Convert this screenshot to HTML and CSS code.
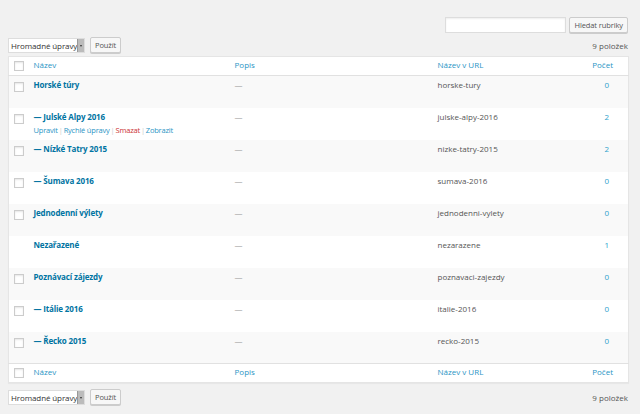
FILE: index.html
```html
<!DOCTYPE html>
<html lang="cs">
<head>
<meta charset="utf-8">
<link rel="stylesheet" href="styles.css">
</head>
<body>
<div class="page">
  <div class="search">
    <input class="search-input" type="text">
    <button class="btn">Hledat rubriky</button>
  </div>
  <div class="toolbar">
    <div class="actions">
      <div class="select"><span class="select-label">Hromadné úpravy</span><span class="select-arrow"></span></div>
      <button class="btn">Použít</button>
    </div>
    <span class="count-items">9 položek</span>
  </div>
  <table class="list">
    <colgroup><col class="c-cb"><col class="c-name"><col class="c-desc"><col class="c-slug"><col class="c-count"></colgroup>
    <thead>
      <tr><th class="cb"><span class="box"></span></th><th>Název</th><th>Popis</th><th>Název v URL</th><th class="num">Počet</th></tr>
    </thead>
    <tbody>
      <tr class="alt"><td class="cb"><span class="box"></span></td><td class="name">Horské túry</td><td class="desc">—</td><td class="slug">horske-tury</td><td class="num">0</td></tr>
      <tr><td class="cb"><span class="box"></span></td><td class="name">— Julské Alpy 2016<div class="row-actions"><span class="ra">Upravit</span><span class="sep">|</span><span class="ra">Rychlé úpravy</span><span class="sep">|</span><span class="ra del">Smazat</span><span class="sep">|</span><span class="ra">Zobrazit</span></div></td><td class="desc">—</td><td class="slug">julske-alpy-2016</td><td class="num">2</td></tr>
      <tr class="alt"><td class="cb"><span class="box"></span></td><td class="name">— Nízké Tatry 2015</td><td class="desc">—</td><td class="slug">nizke-tatry-2015</td><td class="num">2</td></tr>
      <tr><td class="cb"><span class="box"></span></td><td class="name">— Šumava 2016</td><td class="desc">—</td><td class="slug">sumava-2016</td><td class="num">0</td></tr>
      <tr class="alt"><td class="cb"><span class="box"></span></td><td class="name">Jednodenní výlety</td><td class="desc">—</td><td class="slug">jednodenni-vylety</td><td class="num">0</td></tr>
      <tr><td class="cb"></td><td class="name">Nezařazené</td><td class="desc">—</td><td class="slug">nezarazene</td><td class="num">1</td></tr>
      <tr class="alt"><td class="cb"><span class="box"></span></td><td class="name">Poznávací zájezdy</td><td class="desc">—</td><td class="slug">poznavaci-zajezdy</td><td class="num">0</td></tr>
      <tr><td class="cb"><span class="box"></span></td><td class="name">— Itálie 2016</td><td class="desc">—</td><td class="slug">italie-2016</td><td class="num">0</td></tr>
      <tr class="alt"><td class="cb"><span class="box"></span></td><td class="name">— Řecko 2015</td><td class="desc">—</td><td class="slug">recko-2015</td><td class="num">0</td></tr>
    </tbody>
    <tfoot>
      <tr><th class="cb"><span class="box"></span></th><th>Název</th><th>Popis</th><th>Název v URL</th><th class="num">Počet</th></tr>
    </tfoot>
  </table>
  <div class="toolbar bottom">
    <div class="actions">
      <div class="select"><span class="select-label">Hromadné úpravy</span><span class="select-arrow"></span></div>
      <button class="btn">Použít</button>
    </div>
    <span class="count-items">9 položek</span>
  </div>
</div>
</body>
</html>
```
FILE: styles.css
```css
* { box-sizing: border-box; }
html, body { margin: 0; padding: 0; }
body {
  background: #f1f1f1;
  font-family: "Open Sans", "Noto Sans", sans-serif;
  font-size: 8px;
  color: #444;
  width: 640px;
  height: 414px;
  overflow: hidden;
}
.page { padding: 17px 12px 0 8px; }
.search { display: flex; justify-content: flex-end; gap: 3px; height: 16px; }
.search-input {
  width: 121px; height: 16px; margin: 0; padding: 0;
  border: 1px solid #ddd; background: #fff;
  box-shadow: inset 0 1px 2px rgba(0,0,0,0.07);
}
.btn {
  font-family: inherit; font-size: 7.5px; color: #555;
  height: 16px; margin: 0; padding: 0 4px;
  background: #f7f7f7; border: 1px solid #ccc; border-radius: 2px;
  box-shadow: 0 1px 0 #ccc; line-height: 14px; letter-spacing: -0.1px;
}
.toolbar { display: flex; justify-content: space-between; align-items: center; margin-top: 4px; height: 16px; }
.toolbar.bottom { margin-top: 6px; }
.actions { display: flex; align-items: center; gap: 5px; }
.select {
  display: flex; width: 77px; height: 15px; background: #fff;
  border: 1px solid #ddd; align-items: center;
}
.select-label { flex: 1; padding-left: 2px; color: #333; white-space: nowrap; font-size: 8px; letter-spacing: -0.1px; }
.select-arrow {
  width: 7px; height: 13px; background: #bbb; position: relative;
  border-left: 1px solid #999;
}
.select-arrow::after {
  content: ""; position: absolute; left: 2px; top: 6px;
  border-left: 1.5px solid transparent; border-right: 1.5px solid transparent; border-top: 2px solid #333;
}
.count-items { color: #555; font-size: 8px; }
.list {
  width: 620px; margin-top: 3px; border-collapse: collapse; table-layout: fixed;
  background: #fff; border: 1px solid #e5e5e5; box-shadow: 0 1px 1px rgba(0,0,0,0.04);
}
.c-cb { width: 21px; }
.c-name { width: 201px; }
.c-desc { width: 203px; }
.c-slug { width: 142px; }
.c-count { width: 53px; }
th {
  font-weight: normal; text-align: left; color: #2a95c5; height: 19px;
  padding: 0 4px 2px; line-height: 10px;
}
thead th { border-bottom: 1px solid #e1e1e1; }
tfoot th { border-top: 1px solid #e1e1e1; }
th.num { text-align: right; padding-right: 15px; }
td { vertical-align: top; height: 32px; padding: 4px 4px 0; line-height: 10px; }
tr.alt td { background: #f9f9f9; }
.name { letter-spacing: -0.15px; }
.cb { padding: 0 0 0 5px; vertical-align: top; }
th.cb { vertical-align: middle; padding-top: 0; }
td.cb { padding-top: 6px; }
.box {
  display: block; width: 10px; height: 10px; border: 1px solid #ccc; background: #fff;
  box-shadow: inset 0 1px 2px rgba(0,0,0,0.1);
}
.name { font-weight: bold; color: #0074a2; }
.desc { color: #999; }
.slug { color: #555; }
td.num { text-align: right; color: #2ea2cc; padding-right: 19px; }
.row-actions { font-weight: normal; margin-top: 3px; white-space: nowrap; font-size: 7.5px; letter-spacing: -0.2px; }
.ra { color: #2a95c5; }
.ra.del { color: #c33; }
.sep { color: #ccc; margin: 0 1px; }
```
